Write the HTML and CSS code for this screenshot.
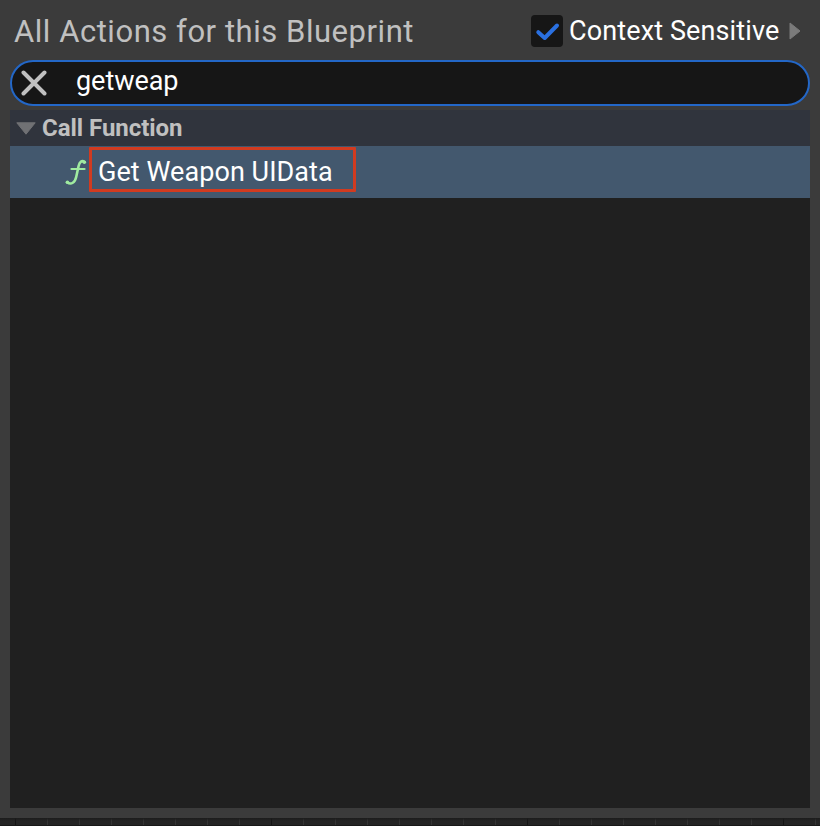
FILE: index.html
```html
<!DOCTYPE html>
<html lang="en">
<head>
<meta charset="utf-8">
<title>All Actions for this Blueprint</title>
<link rel="stylesheet" href="styles.css">
</head>
<body>
<main class="menu">
  <header class="header">
    <h1 class="title">All Actions for this Blueprint</h1>
    <div class="context">
      <span class="checkbox"><svg width="32" height="32" viewBox="0 0 32 32"><path d="M7.3 17.2 13.7 23 26 10.5" fill="none" stroke="#2a70e0" stroke-width="4" stroke-linecap="round" stroke-linejoin="round"/></svg></span>
      <span class="context-label">Context Sensitive</span>
      <svg class="expand" width="12" height="18" viewBox="0 0 12 18"><path d="M1 1 11 9 1 17Z" fill="#7b7b7b" stroke="#7b7b7b" stroke-linejoin="round"/></svg>
    </div>
  </header>
  <div class="search">
    <svg class="clear" width="26" height="26" viewBox="0 0 26 26"><path d="M2.5 2.5 23.5 23.5M23.5 2.5 2.5 23.5" stroke="#c0c0c0" stroke-width="4" stroke-linecap="round"/></svg>
    <span class="query">getweap</span>
  </div>
  <section class="list">
    <div class="category">
      <svg class="arrow" width="20" height="13" viewBox="0 0 20 13"><path d="M.8.8H19.2L10 12.2Z" fill="#707174" stroke="#707174" stroke-linejoin="round"/></svg>
      <span class="category-label">Call Function</span>
    </div>
    <div class="item">
      <svg class="function" width="22" height="28" viewBox="0 0 22 28"><g fill="none" stroke="#a0eba0" stroke-linecap="round"><path d="M19.6 4C17 2 14.6 3.6 13.6 8L11.2 19C10 24.5 6.3 27 2.2 24.5" stroke-width="2.6"/><path d="M6.4 11H19.6" stroke-width="2"/></g><circle cx="19.3" cy="4.2" r="1.8" fill="#a0eba0"/><circle cx="2.4" cy="24.2" r="1.8" fill="#a0eba0"/></svg>
      <span class="highlight"><span class="item-label">Get Weapon UIData</span></span>
    </div>
  </section>
</main>
<div class="graph"></div>
</body>
</html>
```
FILE: styles.css
```css
* { box-sizing: border-box; }
body {
  margin: 0;
  height: 826px;
  overflow: hidden;
  background: #242424;
  font-family: Roboto, sans-serif;
}
svg { display: block; flex: none; }
.menu {
  display: flex;
  flex-direction: column;
  height: 818px;
  padding: 0 10px 10px;
  background: #3b3b3b;
}
.header {
  display: flex;
  justify-content: space-between;
  height: 60px;
  padding: 0 8px 0 4px;
}
.title {
  margin: 0;
  padding-top: 13px;
  font-size: 31px;
  font-weight: 400;
  line-height: 38px;
  letter-spacing: .54px;
  color: #c0c0c0;
  white-space: nowrap;
}
.context { display: flex; padding-top: 15px; }
.checkbox {
  width: 32px;
  height: 32px;
  border-radius: 4px;
  background: #161616;
}
.context-label {
  width: 226px;
  padding-left: 6px;
  font-size: 27px;
  line-height: 32px;
  letter-spacing: .12px;
  color: #fff;
  white-space: nowrap;
}
.expand { margin: 7px 1px 0 0; }
.search {
  display: flex;
  height: 46px;
  padding: 8px 9px;
  border: 2px solid #2367c7;
  border-radius: 23px;
  background: #161616;
}
.query {
  margin: -5px 0 0 29px;
  font-size: 27px;
  line-height: 32px;
  letter-spacing: -.05px;
  color: #fff;
}
.list {
  flex: 1;
  margin-top: 4px;
  background: #202020;
}
.category {
  display: flex;
  height: 36px;
  padding-left: 6px;
  background: #30343d;
}
.arrow { margin-top: 12px; }
.category-label {
  margin-left: 6px;
  font-size: 24px;
  font-weight: 700;
  line-height: 36px;
  letter-spacing: -.04px;
  color: #c0c0c0;
}
.item {
  display: flex;
  height: 52px;
  padding-left: 55px;
  background: #43586e;
}
.function { margin-top: 12px; }
.highlight {
  width: 267px;
  height: 45px;
  margin: 1px 0 0 2px;
  padding-left: 6px;
  border: 3px solid #d13b20;
  border-radius: 1px;
}
.item-label {
  font-size: 27px;
  line-height: 44px;
  letter-spacing: .06px;
  color: #fff;
  white-space: nowrap;
}
.graph {
  height: 8px;
  background:
    linear-gradient(#1c1c1c, transparent 3px),
    linear-gradient(#181818, #181818) 0 7px / 100% 1px no-repeat,
    repeating-linear-gradient(90deg, #141414 0 1px, transparent 1px 256px) 15px 0 / 256px 8px,
    repeating-linear-gradient(90deg, #343434 0 1px, transparent 1px 32px) 15px 0 / 32px 8px,
    #242424;
}
```
